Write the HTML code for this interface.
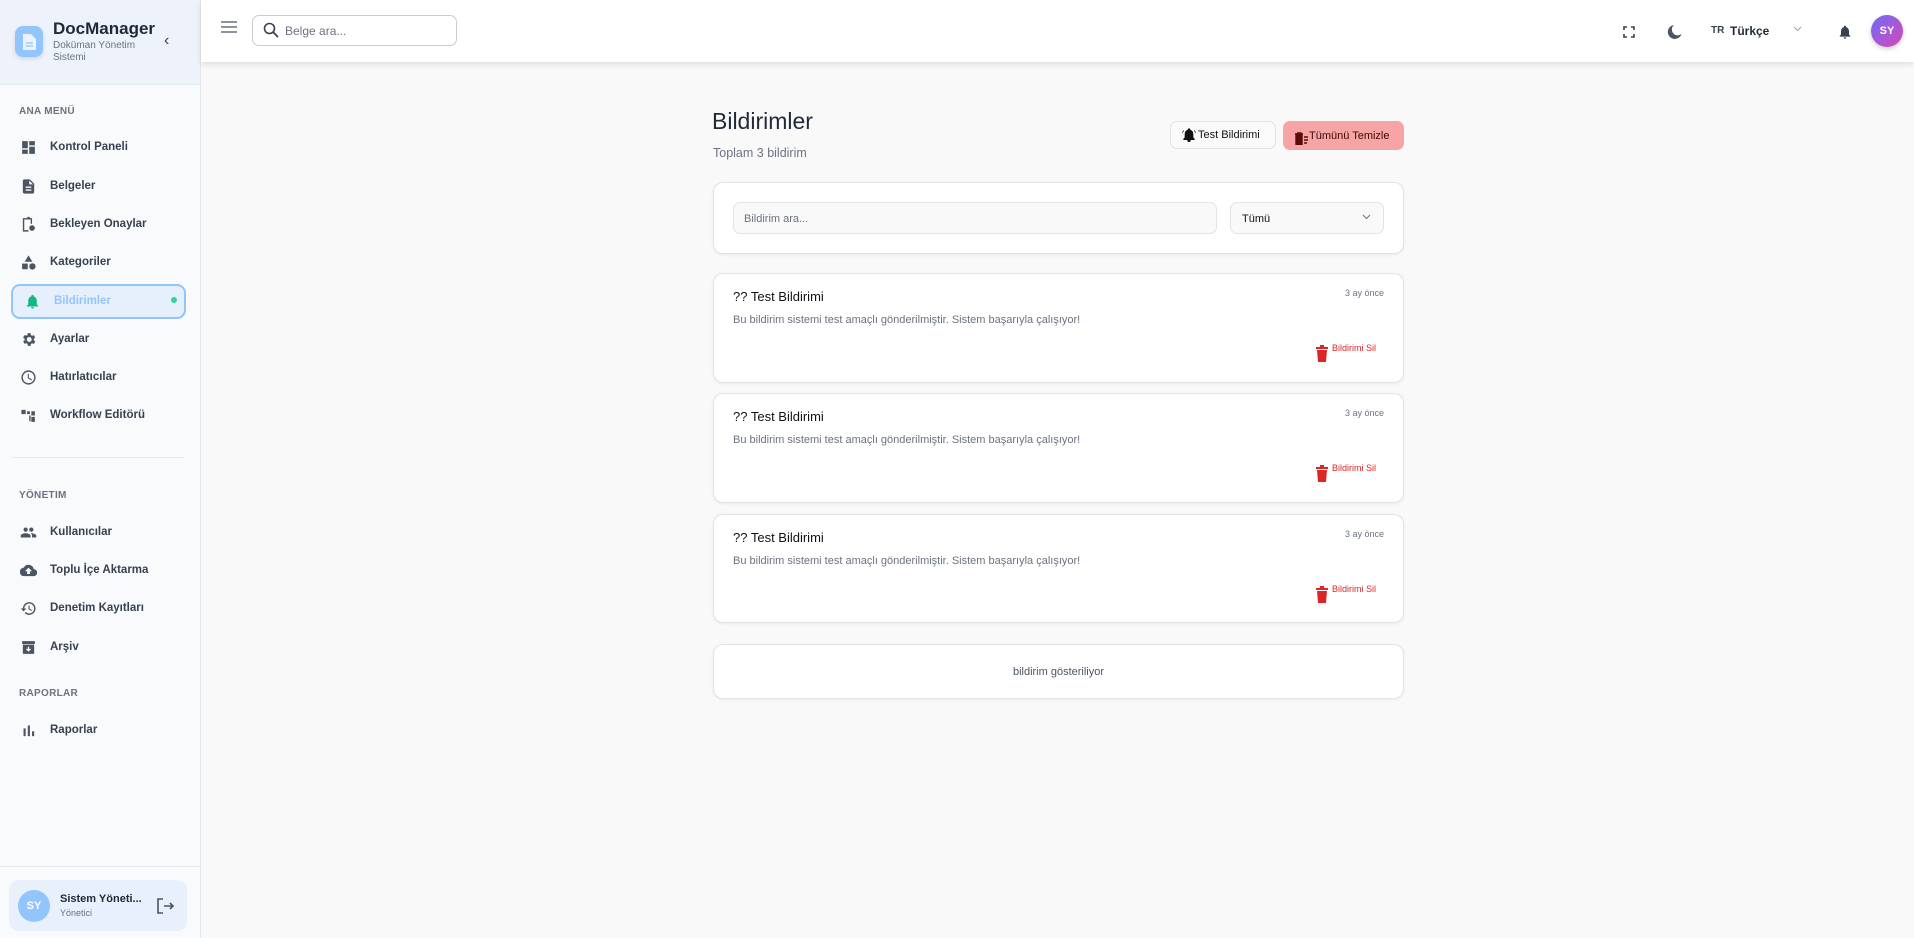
<!DOCTYPE html>
<html><head><meta charset="utf-8"><style>
*{box-sizing:border-box;margin:0;padding:0}
body{width:1914px;height:938px;background:#f9f9f9;font-family:"Liberation Sans",sans-serif;position:relative;overflow:hidden;color:#1f2937}
.abs{position:absolute}
#sb{left:0;top:0;width:201px;height:938px;background:#f8fafc;border-right:1px solid #e5e7eb}
#sbh{left:0;top:0;width:200px;height:85px;background:#eef3fb;border-bottom:1px solid #e5e9f0}
.logo{left:15px;top:26px;width:28px;height:31px;border-radius:8px;background:#93c5fd;box-shadow:0 2px 5px rgba(0,0,0,.12)}
.sec{left:19px;font-size:10px;font-weight:bold;color:#6b7280;letter-spacing:.3px}
.it{left:20px;height:20px;display:flex;align-items:center;font-size:11.5px;font-weight:bold;color:#374151}
.it svg{width:17px;height:17px;margin-right:13px;fill:#4b5563}
#hd{left:201px;top:0;width:1713px;height:62px;background:#fff;box-shadow:0 2px 6px rgba(0,0,0,.12)}
.card{left:713px;width:691px;background:#fff;border:1px solid #e3e3e3;border-radius:10px;box-shadow:0 1px 3px rgba(0,0,0,.06)}
.ct{position:absolute;left:19px;top:15px;font-size:13px;color:#111}
.tm{position:absolute;right:19px;top:14px;font-size:9px;color:#6b7280}
.bd{position:absolute;left:19px;top:40px;font-size:11px;color:#6b7280}
.del{position:absolute;right:27px;top:69px;font-size:9px;color:#dc2626;display:flex}
.del svg{width:12px;height:17px;margin-right:4px;margin-top:2px;fill:#dc2626}
</style></head><body>
<div id="sb" class="abs"></div>
<div id="sbh" class="abs"></div>
<div class="abs logo"><svg width="28" height="31" viewBox="0 0 28 31"><path d="M8 8h8l5 5v11H8z" fill="#eaf3ff"/><path d="M11 17h7M11 20h7" stroke="#93c5fd" stroke-width="1.2"/></svg></div>
<div class="abs" style="left:53px;top:19px;font-size:17px;font-weight:bold;color:#1f2937">DocManager</div>
<div class="abs" style="left:53px;top:40px;font-size:10px;color:#6b7280;line-height:12px">Doküman Yönetim<br>Sistemi</div>
<div class="abs" style="left:164px;top:32px;font-size:16px;color:#374151">‹</div>
<div class="abs sec" style="top:106px">ANA MENÜ</div>
<div class="abs it" style="top:137px"><svg viewBox="0 0 24 24"><path d="M3 13h8V3H3zm0 8h8v-6H3zm10 0h8V11h-8zm0-18v6h8V3z"/></svg>Kontrol Paneli</div>
<div class="abs it" style="top:176px"><svg viewBox="0 0 24 24"><path d="M14 2H6c-1.1 0-2 .9-2 2v16c0 1.1.9 2 2 2h12c1.1 0 2-.9 2-2V8zm2 16H8v-2h8zm0-4H8v-2h8zm-3-5V3.5L18.5 9z"/></svg>Belgeler</div>
<div class="abs it" style="top:214px"><svg viewBox="0 0 24 24"><path d="M7 3h3a2 2 0 014 0h3v8h-2V5H6v15h6v2H4V3zm10 10a4 4 0 110 8 4 4 0 010-8z"/></svg>Bekleyen Onaylar</div>
<div class="abs it" style="top:252px"><svg viewBox="0 0 24 24"><path d="M12 2l-5.5 9h11z"/><circle cx="17.5" cy="17.5" r="4.5"/><path d="M3 13.5h8v8H3z"/></svg>Kategoriler</div>
<div class="abs" style="left:11px;top:284px;width:175px;height:35px;border:2px solid #93c5fd;border-radius:9px;background:#e6f0fc"></div>
<div class="abs it" style="top:291px;left:24px;color:#93c5fd"><svg viewBox="0 0 24 24" style="fill:#10b981"><path d="M12 22c1.1 0 2-.9 2-2h-4a2 2 0 002 2zm6-6v-5c0-3.07-1.64-5.64-4.5-6.32V4a1.5 1.5 0 00-3 0v.68C7.63 5.36 6 7.92 6 11v5l-2 2v1h16v-1z"/></svg>Bildirimler</div>
<div class="abs" style="left:171px;top:297px;width:6px;height:6px;border-radius:50%;background:#34d399"></div>
<div class="abs it" style="top:329px"><svg viewBox="0 0 24 24"><path d="M19.4 13a7.5 7.5 0 000-2l2.1-1.6-2-3.5-2.5 1a7 7 0 00-1.7-1L15 3h-4l-.4 2.7a7 7 0 00-1.7 1l-2.5-1-2 3.5L6.6 11a7.5 7.5 0 000 2l-2.1 1.6 2 3.5 2.5-1a7 7 0 001.7 1L11 21h4l.4-2.7a7 7 0 001.7-1l2.5 1 2-3.5zM13 15.5a3.5 3.5 0 110-7 3.5 3.5 0 010 7z"/></svg>Ayarlar</div>
<div class="abs it" style="top:367px"><svg viewBox="0 0 24 24"><path d="M12 2a10 10 0 100 20 10 10 0 000-20zm0 18a8 8 0 110-16 8 8 0 010 16zm.5-13H11v6l5.2 3.2.8-1.3-4.5-2.7z"/></svg>Hatırlatıcılar</div>
<div class="abs it" style="top:405px"><svg viewBox="0 0 24 24"><path d="M2 4h6v6H2zm8 2h4v4h-4zm6 0h5v6h-5zm0 8h5v7h-5zm-3-2h2v8h-2z"/></svg>Workflow Editörü</div>
<div class="abs" style="left:12px;top:457px;width:172px;height:1px;background:#e5e7eb"></div>
<div class="abs sec" style="top:490px">YÖNETIM</div>
<div class="abs it" style="top:522px"><svg viewBox="0 0 24 24"><path d="M16 11a3 3 0 100-6 3 3 0 000 6zm-8 0a3 3 0 100-6 3 3 0 000 6zm0 2c-2.3 0-7 1.2-7 3.5V19h14v-2.5C15 14.2 10.3 13 8 13zm8 0c-.3 0-.6 0-1 .1 1.2.8 2 2 2 3.4V19h6v-2.5c0-2.3-4.7-3.5-7-3.5z"/></svg>Kullanıcılar</div>
<div class="abs it" style="top:560px"><svg viewBox="0 0 24 24"><path d="M19.4 10A7.5 7.5 0 005.4 8 6 6 0 006 20h13a5 5 0 00.4-10zM14 13v4h-4v-4H7l5-5 5 5z"/></svg>Toplu İçe Aktarma</div>
<div class="abs it" style="top:598px"><svg viewBox="0 0 24 24"><path d="M13 3a9 9 0 00-9 9H1l4 4 4-4H6a7 7 0 117 7 7 7 0 01-5-2l-1.4 1.4A9 9 0 1013 3zm-1 5v5l4.3 2.5.7-1.2-3.5-2.1V8z"/></svg>Denetim Kayıtları</div>
<div class="abs it" style="top:637px"><svg viewBox="0 0 24 24"><path d="M3 3h18v4H3zm1 5h16v12a1 1 0 01-1 1H5a1 1 0 01-1-1zm8 10l4-4h-3v-3h-2v3H8z"/></svg>Arşiv</div>
<div class="abs sec" style="top:688px">RAPORLAR</div>
<div class="abs it" style="top:720px"><svg viewBox="0 0 24 24"><path d="M5 9h3v11H5zm6-4h3v15h-3zm6 8h3v7h-3z"/></svg>Raporlar</div>
<div class="abs" style="left:0;top:866px;width:200px;height:1px;background:#e5e9f0"></div>
<div class="abs" style="left:9px;top:880px;width:178px;height:51px;border-radius:10px;background:#e8f0fb"></div>
<div class="abs" style="left:18px;top:890px;width:32px;height:32px;border-radius:50%;background:#93c5fd;color:#fff;font-size:11px;font-weight:bold;display:flex;align-items:center;justify-content:center">SY</div>
<div class="abs" style="left:60px;top:893px;font-size:11px;font-weight:bold;color:#1f2937">Sistem Yöneti...</div>
<div class="abs" style="left:60px;top:908px;font-size:9px;color:#6b7280">Yönetici</div>
<svg class="abs" style="left:155px;top:897px" width="20" height="18" viewBox="0 0 20 18"><path d="M8 2H3v14h5M9 9h9m-3-3l3 3-3 3" stroke="#4b5563" stroke-width="1.6" fill="none"/></svg>

<div id="hd" class="abs"></div>
<svg class="abs" style="left:221px;top:21px" width="16" height="12"><path d="M0 1h16M0 6h16M0 11h16" stroke="#4b5563" stroke-width="1.2"/></svg>
<div class="abs" style="left:252px;top:15px;width:205px;height:31px;border:1px solid #ccc;border-radius:7px"></div>
<svg class="abs" style="left:263px;top:22px" width="16" height="16" viewBox="0 0 16 16"><circle cx="6.5" cy="6.5" r="5" stroke="#374151" stroke-width="1.6" fill="none"/><path d="M10 10l5 5" stroke="#374151" stroke-width="1.8"/></svg>
<div class="abs" style="left:285px;top:24px;font-size:12px;color:#6b7280">Belge ara...</div>
<svg class="abs" style="left:1623px;top:26px" width="12" height="12"><path d="M1 4V1h3M8 1h3v3M11 8v3H8M4 11H1V8" stroke="#374151" stroke-width="1.6" fill="none"/></svg>
<svg class="abs" style="left:1667px;top:24px" width="16" height="16" viewBox="0 0 16 16"><path d="M7 1a7 7 0 107.5 9A5.5 5.5 0 017 1z" fill="#4b5563"/></svg>
<div class="abs" style="left:1711px;top:25px;font-size:10px;font-weight:bold;color:#374151">TR</div>
<div class="abs" style="left:1730px;top:24px;font-size:12px;font-weight:bold;color:#1f2937">Türkçe</div>
<svg class="abs" style="left:1793px;top:26px" width="9" height="6"><path d="M1 1l3.5 3.5L8 1" stroke="#9ca3af" fill="none"/></svg>
<svg class="abs" style="left:1837px;top:23px" width="16" height="18" viewBox="0 0 24 24"><path d="M12 22c1.1 0 2-.9 2-2h-4a2 2 0 002 2zm6-6v-5c0-3.07-1.64-5.64-4.5-6.32V4a1.5 1.5 0 00-3 0v.68C7.63 5.36 6 7.92 6 11v5l-2 2v1h16v-1z" fill="#374151"/></svg>
<div class="abs" style="left:1871px;top:15px;width:32px;height:32px;border-radius:50%;background:linear-gradient(135deg,#6d6cf6,#d946b8);color:#fff;font-size:11px;font-weight:bold;display:flex;align-items:center;justify-content:center;box-shadow:0 2px 5px rgba(0,0,0,.2)">SY</div>

<div class="abs" style="left:712px;top:108px;font-size:23px;color:#1f2937">Bildirimler</div>
<div class="abs" style="left:713px;top:146px;font-size:12.5px;color:#6b7280">Toplam 3 bildirim</div>
<div class="abs" style="left:1170px;top:121px;width:106px;height:28px;border:1px solid #e3e3e3;border-radius:7px;background:#fafafa;font-size:11px;display:flex;align-items:center;padding-left:10px;color:#111"><svg width="16" height="16" viewBox="0 0 24 24" style="margin-right:1px"><path d="M12 22c1.1 0 2-.9 2-2h-4a2 2 0 002 2zm6-6v-5c0-3.07-1.64-5.64-4.5-6.32V4a1.5 1.5 0 00-3 0v.68C7.63 5.36 6 7.92 6 11v5l-2 2v1h16v-1zM4 5L2 9m18-4l2 4" fill="#111" stroke="#111" stroke-width="1"/></svg>Test Bildirimi</div>
<div class="abs" style="left:1283px;top:121px;width:121px;height:29px;border-radius:7px;background:#f7a4a4;font-size:11px;display:flex;align-items:center;padding-left:11px;color:#3b0a0a"><svg width="14" height="14" viewBox="0 0 14 14" style="margin-right:1px;margin-top:4px"><path d="M1 3h8M3 2h4v1M2 4h6v10H2zM10 6h4M10 9h4M10 12h3" stroke="#5a0c0c" stroke-width="1.4" fill="#5a0c0c"/></svg>Tümünü Temizle</div>

<div class="abs card" style="top:182px;height:72px"></div>
<div class="abs" style="left:733px;top:202px;width:484px;height:32px;border:1px solid #e3e3e3;border-radius:7px;background:#f9f9f9;font-size:11px;color:#6b7280;padding:10px 10px">Bildirim ara...</div>
<div class="abs" style="left:1230px;top:202px;width:154px;height:32px;border:1px solid #e3e3e3;border-radius:7px;background:#f9f9f9;font-size:11px;color:#111;padding:10px 11px">Tümü</div>
<svg class="abs" style="left:1362px;top:214px" width="9" height="6"><path d="M1 1l3.5 3.5L8 1" stroke="#6b7280" fill="none"/></svg>

<div class="abs card" style="top:273px;height:110px"><div class="ct">?? Test Bildirimi</div><div class="tm">3 ay önce</div><div class="bd">Bu bildirim sistemi test amaçlı gönderilmiştir. Sistem başarıyla çalışıyor!</div><div class="del"><svg viewBox="0 0 12 17"><path d="M0 2h12v2H0zM4 0h4v2H4zM1 5h10l-1 12H2z"/></svg>Bildirimi Sil</div></div>
<div class="abs card" style="top:393px;height:110px"><div class="ct">?? Test Bildirimi</div><div class="tm">3 ay önce</div><div class="bd">Bu bildirim sistemi test amaçlı gönderilmiştir. Sistem başarıyla çalışıyor!</div><div class="del"><svg viewBox="0 0 12 17"><path d="M0 2h12v2H0zM4 0h4v2H4zM1 5h10l-1 12H2z"/></svg>Bildirimi Sil</div></div>
<div class="abs card" style="top:514px;height:109px"><div class="ct">?? Test Bildirimi</div><div class="tm">3 ay önce</div><div class="bd">Bu bildirim sistemi test amaçlı gönderilmiştir. Sistem başarıyla çalışıyor!</div><div class="del"><svg viewBox="0 0 12 17"><path d="M0 2h12v2H0zM4 0h4v2H4zM1 5h10l-1 12H2z"/></svg>Bildirimi Sil</div></div>
<div class="abs card" style="top:644px;height:55px;display:flex;align-items:center;justify-content:center;font-size:11px;color:#4b5563">bildirim gösteriliyor</div>
</body></html>
